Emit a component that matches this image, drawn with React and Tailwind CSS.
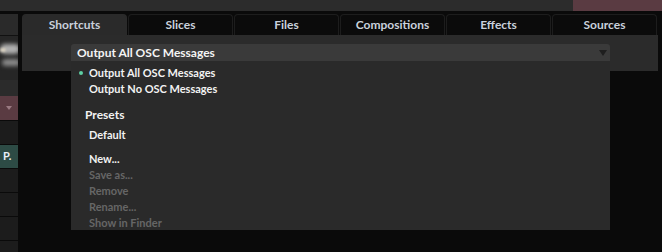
import React from "react";

const tabs = ["Shortcuts", "Slices", "Files", "Compositions", "Effects", "Sources"];

function LeftColumn() {
    return (
        <div className="flex w-[18px] flex-col">
            <div className="h-[21px] bg-[#2a2a2a]"></div>
            <div className="h-[1px] bg-[#111]"></div>
            <div className="relative h-[44px] overflow-hidden bg-[#262626]">
                <div className="absolute left-[0px] top-[8px] h-[10px] w-[20px] rounded-full bg-[#b0b0b0] blur-[2px]"></div>
                <div className="absolute left-[0px] top-[12px] h-[4px] w-[6px] rounded-full bg-[#d8d0c0] blur-[1px]"></div>
                <div className="absolute left-[2px] top-[23px] h-[7px] w-[18px] rounded-full bg-[#8a8a8a] blur-[2px]"></div>
            </div>
            <div className="h-[16px] bg-[#2b2b2b]"></div>
            <div className="flex h-[24px] items-center justify-center bg-[#5a3b42]">
                <svg width="6" height="4" viewBox="0 0 6 4">
                    <path d="M0 0 L6 0 L3 4 Z" fill="#9a7a82" />
                </svg>
            </div>
            <div className="mt-[1px] h-[23px] bg-[#1c1c1c]"></div>
            <div className="mt-[1px] flex h-[23px] items-center bg-[#2d4b45] pl-[3px] text-[11px] font-bold text-[#e8f0f8]">
                P.
            </div>
            <div className="mt-[1px] h-[23px] bg-[#1c1c1c]"></div>
            <div className="mt-[1px] h-[23px] bg-[#1c1c1c]"></div>
            <div className="mt-[1px] h-[23px] bg-[#1c1c1c]"></div>
            <div className="mt-[1px] h-[23px] bg-[#1c1c1c]"></div>
        </div>
    );
}

function MenuItem({ children, disabled = false, checked = false }) {
    return (
        <div
            className={`relative h-[16px] pl-[18px] text-[11px] font-bold leading-[16px] ${
                disabled ? "text-[#666]" : "text-[#f2f2f2]"
            }`}
        >
            {checked && (
                <span className="absolute left-[8px] top-[6px] h-[4px] w-[4px] rounded-full bg-[#5ecfa3]"></span>
            )}
            {children}
        </div>
    );
}

function OscDropdown() {
    return (
        <div className="absolute left-[71px] top-[44px] w-[539px]">
            <div className="flex h-[17px] items-center justify-between rounded-t-[3px] bg-[#3a3a3a] pl-[6px] pr-[3px]">
                <span className="text-[12px] font-bold text-[#f4f4f4]">Output All OSC Messages</span>
                <svg width="8" height="6" viewBox="0 0 8 6">
                    <path d="M0 0 L8 0 L4 6 Z" fill="#1e1e1e" />
                </svg>
            </div>
            <div className="flex h-[169px] flex-col bg-[#2a2a2a] pt-[4px]">
                <MenuItem checked>Output All OSC Messages</MenuItem>
                <MenuItem>Output No OSC Messages</MenuItem>
                <div className="mt-[10px] h-[16px] pl-[14px] text-[12px] font-bold leading-[16px] text-[#f2f2f2]">
                    Presets
                </div>
                <div className="mt-[4px]">
                    <MenuItem>Default</MenuItem>
                </div>
                <div className="mt-[3px] h-[2px] bg-[#1a1a1a]"></div>
                <div className="mt-[5px]">
                    <MenuItem>New...</MenuItem>
                    <MenuItem disabled>Save as...</MenuItem>
                    <MenuItem disabled>Remove</MenuItem>
                    <MenuItem disabled>Rename...</MenuItem>
                    <MenuItem disabled>Show in Finder</MenuItem>
                </div>
            </div>
        </div>
    );
}

export default function App() {
    return (
        <div
            className="relative h-[252px] w-[662px] overflow-hidden bg-[#0a0a0a]"
            style={{ fontFamily: "Lato, 'DejaVu Sans', sans-serif" }}
        >
            <div className="flex h-[11px]">
                <div className="flex-1 bg-[#2c2c2c]"></div>
                <div className="w-[89px] bg-[#5a3b42]"></div>
            </div>
            <div className="h-[3px]"></div>
            <div className="flex">
                <LeftColumn />
                <div className="w-[4px]"></div>
                <div className="flex w-[636px] flex-col">
                    <div className="flex h-[21px] gap-[1px]">
                        {tabs.map((t, i) => (
                            <div
                                key={t}
                                className={`flex w-[105px] items-center justify-center rounded-t-[4px] border border-b-0 text-[12px] font-bold text-[#c9d1dc] ${
                                    i === 0 ? "border-[#2a2a2a] bg-[#2a2a2a]" : "border-[#1d1d1d] bg-[#0b0b0b]"
                                }`}
                            >
                                {t}
                            </div>
                        ))}
                    </div>
                    <div className="h-[36px] bg-[#2b2b2b]"></div>
                </div>
            </div>
            <OscDropdown />
        </div>
    );
}
